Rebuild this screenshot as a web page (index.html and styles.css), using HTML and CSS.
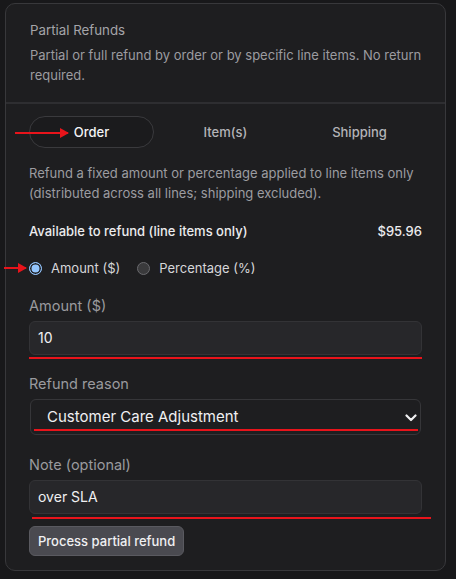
FILE: index.html
```html
<!DOCTYPE html>
<html>
<head>
<meta charset="utf-8">
<link rel="stylesheet" href="styles.css">
</head>
<body>
<div class="card">
  <div class="head">
    <div class="title">Partial Refunds</div>
    <div class="desc">Partial or full refund by order or by specific line items. No return required.</div>
  </div>
  <div class="body">
    <div class="tabs">
      <div class="tab active">Order
        <span class="arrow arrow-tab"></span>
      </div>
      <div class="tab">Item(s)</div>
      <div class="tab">Shipping</div>
    </div>
    <div class="info">Refund a fixed amount or percentage applied to line items only (distributed across all lines; shipping excluded).</div>
    <div class="avail"><span>Available to refund (line items only)</span><span>$95.96</span></div>
    <div class="radios">
      <label class="radio"><span class="dot on"></span>Amount ($)<span class="arrow arrow-radio"></span></label>
      <label class="radio"><span class="dot"></span>Percentage (%)</label>
    </div>
    <div class="field f-amount">
      <div class="label">Amount ($)</div>
      <div class="wrap">
        <div class="input">10</div>
        <span class="mark m-amount"></span>
      </div>
    </div>
    <div class="field f-reason">
      <div class="label">Refund reason</div>
      <div class="wrap">
        <div class="select">Customer Care Adjustment
          <svg class="chev" width="12" height="8" viewBox="0 0 12 8"><path d="M1.5 1.5 L6 6 L10.5 1.5" fill="none" stroke="#f0f0f2" stroke-width="2.2" stroke-linecap="round" stroke-linejoin="round"/></svg>
        </div>
        <span class="mark m-reason"></span>
      </div>
    </div>
    <div class="field f-note">
      <div class="label">Note (optional)</div>
      <div class="wrap">
        <div class="input">over SLA</div>
        <span class="mark m-note"></span>
      </div>
    </div>
    <div><button class="btn">Process partial refund</button></div>
  </div>
</div>
</body>
</html>
```

FILE: styles.css
```css
* { box-sizing: border-box; }
html, body { margin: 0; background: #18181a; }
body {
  padding: 3px 10px 8px 5px;
  font-family: Inter, "Noto Sans", sans-serif;
  font-size: 13px;
  line-height: 20px;
  color: #e6e6e8;
}
.card {
  background: #1e1e20;
  border: 1px solid #38383b;
  border-radius: 10px;
  position: relative;
}
.head {
  padding: 16px 14px 17px 24px;
  border-bottom: 2px solid #2e2e31;
}
.title { color: #a5a5a9; font-size: 13.3px; }
.desc { color: #9c9ca0; margin-top: 5px; }
.body { padding: 12px 23px 14px 23px; display: flex; flex-direction: column; }
.tabs {
  display: grid;
  grid-template-columns: repeat(3, 1fr);
  column-gap: 9px;
}
.tab {
  height: 32px;
  border-radius: 16px;
  display: flex; align-items: center; justify-content: center;
  color: #b4b4b8;
  font-weight: 500;
  position: relative;
  border: 1px solid transparent;
}
.tab.active { color: #f4f4f6; border-color: #3a3a3d; background: #1b1b1d; }
.info { color: #9c9ca0; margin-top: 15px; }
.avail {
  margin-top: 18px;
  display: flex; justify-content: space-between;
  font-weight: 500; color: #ececee;
}
.radios { display: flex; gap: 17px; margin-top: 17px; }
.radio { display: flex; align-items: center; gap: 9px; color: #d6d6d9; position: relative; font-size: 13px; }
.dot {
  width: 13px; height: 13px; border-radius: 50%;
  background: #3a3a3c; border: 1px solid #6a6a6e;
}
.dot.on {
  background: #93c5fd; border: 1.5px solid #93c5fd;
  box-shadow: inset 0 0 0 1.5px #1e1e20;
}
.field { margin-top: 18px; }
.f-amount { margin-top: 18px; }
.f-reason { margin-top: 19px; }
.f-note { margin-top: 20px; }
.label { color: #9a9a9e; font-size: 14.5px; }
.wrap { position: relative; margin-top: 5px; }
.input {
  height: 34px;
  background: #27272a;
  border: 1px solid #333336;
  border-radius: 6px;
  padding: 0 8px;
  display: flex; align-items: center;
  font-size: 14px;
  color: #f0f0f2;
}
.select {
  height: 36px;
  margin: 0 1px;
  background: #1e1e20;
  border: 1px solid #363639;
  border-radius: 6px;
  padding: 0 16px;
  display: flex; align-items: center; justify-content: space-between;
  font-size: 15px;
  color: #f0f0f2;
}
.chev { margin-right: -13px; margin-top: 1px; }
.btn {
  margin-top: 12px;
  font-family: inherit;
  font-size: 13px;
  font-weight: 500;
  color: #f0f0f2;
  background: #4a4a50;
  border: 1px solid #5a5a60;
  border-radius: 6px;
  height: 30px;
  padding: 0 8px;
}
.mark { position: absolute; height: 2px; background: #e8141b; }
.m-amount { left: 0; right: 0; top: calc(100% + 2px); }
.m-reason { left: 5px; right: 4px; top: 30px; }
.m-note { left: 3px; right: -9px; top: calc(100% + 3px); }
.arrow { position: absolute; height: 2px; background: #e8141b; }
.arrow::after {
  content: ""; position: absolute; right: -1px; top: -4px;
  border-left: 9px solid #e8141b;
  border-top: 5px solid transparent;
  border-bottom: 5px solid transparent;
}
.arrow-tab { left: -15px; width: 53px; top: 15px; }
.arrow-radio { left: -25px; width: 22px; top: 9px; }
```
